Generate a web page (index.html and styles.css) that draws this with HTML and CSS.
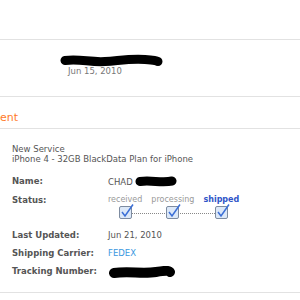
FILE: index.html
```html
<!DOCTYPE html>
<html>
<head>
<meta charset="utf-8">
<link rel="stylesheet" href="styles.css">
</head>
<body>
<div class="top"></div>
<div class="summary">
  <svg class="scrib scrib-top" width="104" height="14" viewBox="0 0 104 14"><path d="M5 6.5 C 20 4.5, 30 8.5, 45 7.5 S 70 4.5, 85 5.5 S 96 7.5, 98 7.5" stroke="#000" stroke-width="9" fill="none" stroke-linecap="round"/></svg>
  <div class="date">Jun 15, 2010</div>
</div>
<div class="heading">ent</div>
<div class="details">
  <div class="service">New Service<br>iPhone 4 - 32GB BlackData Plan for iPhone</div>
  <div class="grid">
    <div class="label">Name:</div>
    <div class="value">CHAD <svg class="scrib" width="42" height="11" viewBox="0 0 42 11"><path d="M5 5.5 C 15 4, 28 7, 37 5" stroke="#000" stroke-width="9" fill="none" stroke-linecap="round"/></svg></div>
    <div class="label">Status:</div>
    <div class="value">
      <div class="status">
        <div class="step"><span class="step-label">received</span><svg class="box" width="15" height="15" viewBox="0 0 15 15"><rect x="0.5" y="2.5" width="12" height="12" rx="1.5" fill="#dce8f8" stroke="#7d8ba0"/><path d="M3 8 L6 12 L14 0.5" stroke="#3b6fd6" stroke-width="1.5" fill="none"/></svg></div>
        <div class="step"><span class="step-label">processing</span><svg class="box" width="15" height="15" viewBox="0 0 15 15"><rect x="0.5" y="2.5" width="12" height="12" rx="1.5" fill="#dce8f8" stroke="#7d8ba0"/><path d="M3 8 L6 12 L14 0.5" stroke="#3b6fd6" stroke-width="1.5" fill="none"/></svg></div>
        <div class="step"><span class="step-label current">shipped</span><svg class="box" width="15" height="15" viewBox="0 0 15 15"><rect x="0.5" y="2.5" width="12" height="12" rx="1.5" fill="#dce8f8" stroke="#7d8ba0"/><path d="M3 8 L6 12 L14 0.5" stroke="#3b6fd6" stroke-width="1.5" fill="none"/></svg></div>
      </div>
    </div>
    <div class="label">Last Updated:</div>
    <div class="value">Jun 21, 2010</div>
    <div class="label">Shipping Carrier:</div>
    <div class="value link">FEDEX</div>
    <div class="label">Tracking Number:</div>
    <div class="value"><svg class="scrib" width="68" height="13" viewBox="0 0 68 13"><path d="M6 7 C 20 5, 35 8, 48 6 S 60 5, 62 6" stroke="#000" stroke-width="10" fill="none" stroke-linecap="round"/></svg></div>
  </div>
</div>
</body>
</html>
```
FILE: styles.css
```css
html, body {
  margin: 0;
  padding: 0;
  background: #fff;
}
body {
  font-family: "DejaVu Sans", Verdana, sans-serif;
  font-size: 8.5px;
  color: #555;
  width: 300px;
  overflow: hidden;
}
.top {
  height: 39px;
  border-bottom: 1px solid #e2e2e2;
}
.summary {
  box-sizing: border-box;
  height: 57px;
  padding-top: 14px;
  border-bottom: 1px solid #e2e2e2;
}
.scrib {
  display: inline-block;
  vertical-align: middle;
}
.scrib-top {
  display: block;
  margin-left: 60px;
}
.date {
  margin: -2px 0 0 68px;
  line-height: 10px;
  color: #777;
}
.heading {
  padding: 14px 0 3px 0;
  height: 14px;
  line-height: 14px;
  font-size: 11px;
  color: #ff7a2a;
  border-bottom: 1px solid #e2e2e2;
}
.details {
  box-sizing: border-box;
  padding: 15px 0 0 12px;
  height: 164px;
  border-bottom: 1px solid #e2e2e2;
}
.service {
  line-height: 10px;
  color: #555;
}
.grid {
  margin-top: 12px;
  display: grid;
  grid-template-columns: 96px 1fr;
  row-gap: 8px;
  line-height: 10px;
}
.label {
  font-weight: bold;
  color: #555;
}
.value {
  color: #555;
  display: flex;
  align-items: center;
  gap: 2px;
}
.link {
  color: #3a98e0;
}
.status {
  position: relative;
  display: flex;
  gap: 9px;
  margin-bottom: 3px;
  font-size: 8px;
}
.status::before {
  content: "";
  position: absolute;
  left: 18px;
  right: 16px;
  top: 18px;
  border-top: 1px dotted #888;
}
.step {
  display: flex;
  flex-direction: column;
  align-items: center;
}
.step-label {
  color: #999;
  line-height: 10px;
}
.step-label.current {
  color: #2f55c8;
  font-weight: bold;
}
.box {
  position: relative;
  margin: -1px 0 0 2px;
}
```
